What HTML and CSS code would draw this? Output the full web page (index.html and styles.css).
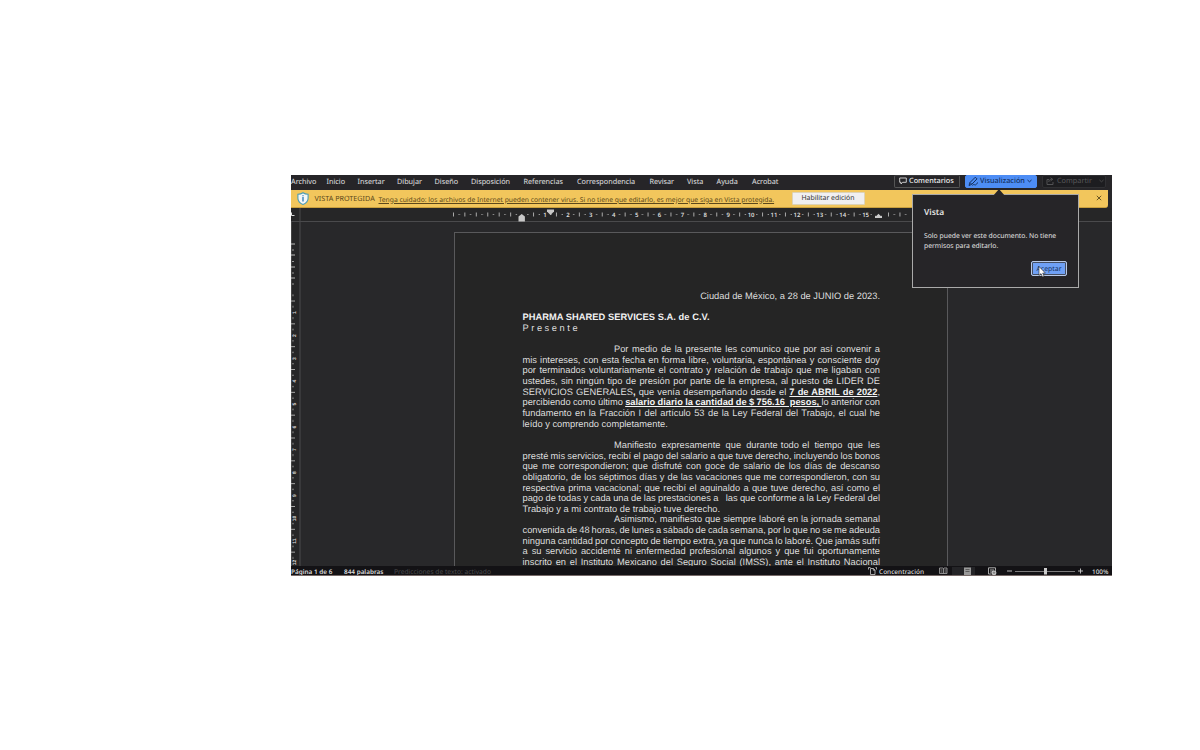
FILE: index.html
```html
<!DOCTYPE html>
<html lang="es">
<head>
<meta charset="utf-8">
<title>Documento</title>
<link rel="stylesheet" href="styles.css">
</head>
<body>
<main class="window">
  <header class="menu">
    <nav class="tabs">
      <span>Archivo</span><span>Inicio</span><span>Insertar</span><span>Dibujar</span><span>Diseño</span><span>Disposición</span><span>Referencias</span><span>Correspondencia</span><span>Revisar</span><span>Vista</span><span>Ayuda</span><span>Acrobat</span>
    </nav>
    <div class="actions">
      <span class="btn comments"><svg width="8" height="8" viewBox="0 0 8 8"><path d="M.7 1h6.600v4.300H3.600L2 7V5.300H.7z" fill="none" stroke="#ddd" stroke-width=".9"/></svg>Comentarios</span>
      <span class="btn viewing"><svg width="11" height="11" viewBox="0 0 11 11"><path d="M1 9.500 2 6.500 7.300 1.200 9 2.900 3.800 8.300zM2 6.500 3.800 8.300M4.500 9.500c1.500-2 2-.2 3-.6S9 7 10 6.500" fill="none" stroke="#14305f" stroke-width="1"/></svg>Visualización<svg width="5" height="4" viewBox="0 0 5 4"><path d="M.5 1 2.500 2.800 4.500 1" fill="none" stroke="#14305f" stroke-width="1"/></svg></span>
      <span class="btn share"><svg width="8" height="8" viewBox="0 0 8 8"><path d="M3 2.500H1v5h6V5M2.800 5c0-2 1.200-2.700 3-2.700M4.500.8 6.800 2.300 4.500 3.900" fill="none" stroke="#58585a" stroke-width=".9"/></svg>Compartir<svg class="share-arrow" width="5" height="4" viewBox="0 0 5 4"><path d="M.5 1 2.500 2.800 4.500 1" fill="none" stroke="#555" stroke-width=".8"/></svg></span>
    </div>
  </header>

  <section class="banner">
    <svg class="shield" width="12" height="13" viewBox="0 0 12 13"><path d="M6 .7C4.500 1.800 2.800 2.200.9 2.200v4c0 3 2 5 5.100 6.200 3.100-1.200 5.100-3.200 5.100-6.200v-4C9.200 2.200 7.500 1.800 6 .7z" fill="#f4f7f8" stroke="#4b9cb5" stroke-width="1.100"/><path d="M6 3.200v1.100M6 5v4.500" stroke="#2878b5" stroke-width="1.300"/></svg>
    <span class="banner-title">VISTA PROTEGIDA</span>
    <span class="banner-text">Tenga cuidado: los archivos de Internet pueden contener virus. Si no tiene que editarlo, es mejor que siga en Vista protegida.</span>
    <span class="enable">Habilitar edición</span>
    <svg class="close" width="6" height="6" viewBox="0 0 6 6"><path d="M.8.800 5.200 5.200M5.200.800.800 5.200" stroke="#6b5724" stroke-width="1"/></svg>
  </section>

  <div class="ruler">
    <svg width="821" height="14" viewBox="0 0 821 14">
      <defs>
        <pattern id="ht" x="231.100" y="0" width="22.900" height="14" patternUnits="userSpaceOnUse">
          <path d="M5.200 6.500h1.200M16.600 6.500h1.200" stroke="#aaa" stroke-width="1.200"/><path d="M11.450 4.500v4" stroke="#aaa" stroke-width="1"/>
        </pattern>
      </defs>
      <path d="M9 0V14" stroke="#48484a"/>
      <path d="M.5 4.500v3h3" fill="none" stroke="#ddd"/>
      <rect x="161" y="0" width="461" height="14" fill="url(#ht)"/>
      <path d="M162.500 4.500v4M185.300 4.500v4M208.200 4.500v4M597.500 4.500v4" stroke="#aaa"/>
      <g class="hnum">
        <text x="254">1</text><text x="276.900">2</text><text x="299.800">3</text><text x="322.700">4</text><text x="345.600">5</text><text x="368.500">6</text><text x="391.400">7</text><text x="414.300">8</text><text x="437.200">9</text><text x="460.100">10</text><text x="483">11</text><text x="505.900">12</text><text x="528.800">13</text><text x="551.700">14</text><text x="574.600">15</text>
      </g>
      <path d="M256 1.500h7v2L259.500 7 256 3.500z" fill="#c8c8c8"/>
      <path d="M227.500 13.500V8.500L230.700 6l3.200 2.500v5z" fill="#c8c8c8"/>
      <rect x="581" y="3" width="13" height="8" fill="#262627"/>
      <path d="M584 10V7.500l1 .7 2.500-2.500 2.500 2.500 1-.7V10z" fill="#ccc"/>
    </svg>
  </div>

  <div class="workspace">
    <aside class="vruler">
      <svg width="8" height="345" viewBox="0 0 8 345">
        <defs>
          <pattern id="vt" x="0" y="67.600" width="8" height="22.830" patternUnits="userSpaceOnUse">
            <path d="M1 5.700h2M1 17.100h2" stroke="#888"/><path d="M0 11.400h4" stroke="#aaa"/>
          </pattern>
        </defs>
        <path d="M.5 0V345" stroke="#444"/>
        <rect y="70" width="8" height="275" fill="url(#vt)"/>
        <path d="M0 22h4M0 33h4M0 45h4M0 56h4" stroke="#bbb"/><path d="M1 28h2M1 39.500h2M1 51h2M1 62h2" stroke="#999"/>
        <g class="vnum">
          <text transform="translate(4.600 90.500)rotate(-90)">1</text><text transform="translate(4.600 113.500)rotate(-90)">2</text><text transform="translate(4.600 136.500)rotate(-90)">3</text><text transform="translate(4.600 159)rotate(-90)">4</text><text transform="translate(4.600 182)rotate(-90)">5</text><text transform="translate(4.600 205)rotate(-90)">6</text><text transform="translate(4.600 227.500)rotate(-90)">7</text><text transform="translate(4.600 250.500)rotate(-90)">8</text><text transform="translate(4.600 273.500)rotate(-90)">9</text><text transform="translate(4.600 296.500)rotate(-90)">10</text><text transform="translate(4.600 319)rotate(-90)">11</text><text transform="translate(4.600 340.500)rotate(-90)">12</text>
        </g>
      </svg>
    </aside>
    <article class="page">
      <p class="right">Ciudad de México, a 28 de JUNIO de 2023.</p>
      <p>&nbsp;</p>
      <p class="start company">PHARMA SHARED SERVICES S.A. de C.V.</p>
      <p class="start spaced">Presente</p>
      <p>&nbsp;</p>
      <p class="indent">Por medio de la presente les comunico que por así convenir a</p>
      <p>mis intereses, con esta fecha en forma libre, voluntaria, espontánea y consciente doy</p>
      <p>por terminados voluntariamente el contrato y relación de trabajo que me ligaban con</p>
      <p>ustedes, sin ningún tipo de presión por parte de la empresa, al puesto de LIDER DE</p>
      <p>SERVICIOS GENERALES<b>,</b> que venía desempeñando desde el <b><u>7 de ABRIL de 2022</u></b><u>,</u></p>
      <p>percibiendo como último <b><u>salario diario la cantidad de $ 756.16&nbsp; pesos, </u></b>lo anterior con</p>
      <p>fundamento en la Fracción I del artículo 53 de la Ley Federal del Trabajo, el cual he</p>
      <p class="start">leído y comprendo completamente.</p>
      <p>&nbsp;</p>
      <p class="indent">Manifiesto expresamente que durante<span class="narrow"> todo </span>el tiempo que les</p>
      <p>presté mis servicios, recibí el pago del salario a que tuve derecho, incluyendo los bonos</p>
      <p>que me correspondieron; que disfruté con goce de salario de los días de descanso</p>
      <p>obligatorio, de los séptimos días y de las vacaciones que me correspondieron, con su</p>
      <p>respectiva prima vacacional; que recibí el aguinaldo a que tuve derecho, así como el</p>
      <p>pago de todas y cada una de las prestaciones a &nbsp; las que conforme a la Ley Federal del</p>
      <p class="start">Trabajo y a mi contrato de trabajo tuve derecho.</p>
      <p class="indent">Asimismo, manifiesto que siempre laboré en la jornada semanal</p>
      <p>convenida de 48 horas, de lunes a sábado de cada semana, por lo que no se me adeuda</p>
      <p>ninguna cantidad por concepto de tiempo extra, ya que nunca lo laboré. Que jamás sufrí</p>
      <p>a su servicio accidenté ni enfermedad profesional algunos y que fui oportunamente</p>
      <p>inscrito en el Instituto Mexicano del Seguro Social (IMSS), ante el Instituto Nacional</p>
    </article>
  </div>

  <footer class="status">
    <span class="pages">Página 1 de 6</span>
    <span class="words">844 palabras</span>
    <span class="predict">Predicciones de texto: activado</span>
    <span class="focus"><svg width="9" height="8" viewBox="0 0 9 8"><path d="M2.500 1.500h3L7 3v4.500H2.500zM5.300 1.500V3.200H7M.5 2.500V.5h2M8.500 2.500V.5h-1" fill="none" stroke="#ccc" stroke-width=".8"/></svg>Concentración</span>
    <svg class="views" width="58" height="8" viewBox="0 0 58 8"><rect x="13" width="23" height="9" fill="#242427"/><path d="M.5 1H4l.5.500L5 1h3v5.500H5L4.500 7 4 6.500H.5zM4.500 1.500V7M1.500 3h2M1.500 5h2M5.500 3h2M5.500 5h2" fill="none" stroke="#aaa" stroke-width=".8"/><path d="M25 .500h7v7.500h-7z" fill="#999"/><path d="M26.500 2.500h4M26.500 4.500h4" stroke="#444" stroke-width=".7"/><path d="M49.500.800h7v3M49.500.800V7h3M51 3h4M51 5h2" fill="none" stroke="#aaa"/><circle cx="55" cy="5.800" r="2.400" fill="#ccc"/><path d="M53.500 5.800h3M55 4.300v3" stroke="#444" stroke-width=".5"/></svg>
    <svg class="slider" width="78" height="8" viewBox="0 0 78 8"><path d="M0 4h5M71 4h5M73.500 1.500v5" stroke="#ccc" stroke-width=".9"/><path d="M8 4.500h60" stroke="#888" stroke-width=".9"/><rect x="37" y="1" width="3" height="6.500" fill="#ccc"/></svg>
    <span class="zoom">100%</span>
  </footer>

  <div class="callout">
    <svg class="tip" width="12" height="7" viewBox="0 0 12 7"><path d="M0 7 6 0l6 7z" fill="#262528"/></svg>
    <h2>Vista</h2>
    <p>Solo puede ver este documento. No tiene permisos para editarlo.</p>
    <span class="accept">Aceptar</span>
    <svg class="cursor" width="8" height="12" viewBox="0 0 8 12"><path d="M1 .5v9l2-1.900L4.500 11l1.600-.7-1.400-3.200h2.700z" fill="#fff" stroke="#222" stroke-width=".6"/></svg>
  </div>
</main>
</body>
</html>
```
FILE: styles.css
```css
* { box-sizing: border-box; }
body { margin: 0; background: #fff; font-family: "Noto Sans", "Open Sans", sans-serif; text-rendering: geometricPrecision; }
svg { display: block; flex: none; }
.window {
  position: relative;
  display: flex;
  flex-direction: column;
  width: 821px;
  height: 401px;
  margin: 174.500px 0 0 291px;
  overflow: hidden;
  background: #28282a;
  white-space: nowrap;
}
.menu { display: flex; justify-content: space-between; flex: none; height: 15.500px; background: #262528; color: #e0e0e0; }
.tabs {
  display: grid;
  grid-template-columns: 35.500px 31px 39.500px 37.500px 36.500px 52.500px 53.500px 72.500px 37.500px 29.500px 35.500px 40px;
  font-size: 7.250px;
  line-height: 14px;
}
.actions { display: flex; gap: 5px; align-items: flex-start; padding-right: 6px; font-size: 7.300px; }
.btn { display: flex; align-items: center; height: 13.500px; border: 1px solid #555; border-top-color: #39393b; border-radius: 2px; }
.comments { width: 66px; gap: 2px; padding-left: 4px; color: #eee; font-weight: 500; }
.viewing { width: 72px; gap: 1px; padding-left: 2px; background: #4d8df5; border-color: #4d8df5; color: #14305f; font-weight: 500; }
.viewing svg:last-child { margin-left: 1px; }
.share { width: 64px; gap: 3px; padding-left: 3px; border-color: #303033; color: #58585a; background: #1d1d20; }
.share-arrow { margin-left: 4px; }
.banner {
  display: flex;
  align-items: center;
  flex: none;
  width: 817px;
  height: 17.500px;
  padding: 0 6px;
  background: #f2c65c;
  border-bottom: 1px solid #c99f3d;
  border-radius: 0 0 3px 0;
  color: #5c481b;
  font-size: 7.200px;
}
.banner-title { width: 64px; margin-left: 5.500px; padding-top: 2px; }
.banner-text { width: 396px; padding-top: 2px; text-decoration: underline; text-underline-offset: 1px; font-size: 6.750px; }
.enable { width: 73px; height: 12.500px; margin-left: 17px; background: #f0eff0; border: 1px solid #ddd3b8; border-radius: 1px; color: #333; line-height: 12.500px; text-align: center; font-size: 6.900px; }
.close { margin-left: auto; margin-right: 0; }
.ruler { flex: none; height: 14px; border-bottom: 1px solid #4a4a4c; background: #262627; }
.hnum text, .vnum text { fill: #ddd; text-anchor: middle; font-family: "Noto Sans", sans-serif; font-size: 6px; font-weight: 600; }
.hnum text { transform: translateY(8.700px); }
.vnum text { font-family: "Liberation Sans", sans-serif; font-size: 5px; font-weight: bold; }
.workspace { display: flex; flex: 1; min-height: 0; overflow: hidden; }
.vruler { flex: none; width: 10px; border-right: 2px solid #39393b; background: #262627; }
.page {
  width: 494.500px;
  height: 370px;
  margin: 10.500px 0 0 152.500px;
  padding: 57.700px 67px 0 68px;
  border: 1px solid #59595b;
  background: #252525;
  color: #dedede;
  font-family: "Liberation Sans", Arial, sans-serif;
  font-size: 9.300px;
  line-height: 10.670px;
  flex: none;
}
.page p { height: 10.670px; margin: 0; text-align: justify; text-align-last: justify; word-spacing: -.8px; }
.page .start { text-align-last: left; word-spacing: 0; }
.page .right { text-align-last: right; word-spacing: 0; }
.page .company { font-weight: bold; color: #f1f1f1; letter-spacing: .04px; }
.page .spaced { letter-spacing: 2.550px; }
.page .indent { padding-left: 91.500px; }
.page .narrow { word-spacing: -2.800px; }
.page b { color: #f4f4f4; }
.status { display: flex; flex: none; align-items: center; height: 9.500px; background: #131215; border-bottom: 1px solid #776a68; color: #ddd; font-size: 6.400px; line-height: 9px; overflow: hidden; }
.status span { position: relative; top: 1px; }
.views, .slider { margin-top: 2px; }
.pages, .words { font-weight: 600; }
.pages { width: 53px; }
.words { width: 50px; }
.predict { width: 474px; color: #4b4b4d; font-size: 6.700px; }
.focus { display: flex; width: 71px; gap: 2px; font-weight: 500; font-size: 6.500px; align-items: center; }
.slider { margin-left: 10px; }
.zoom { margin-left: 7px; font-weight: 500; }
.callout { position: absolute; left: 621px; top: 19px; width: 166.500px; height: 94.500px; padding: 11px 11px 0; background: #262528; border: 1px solid #aaa; color: #e4e4e4; }
.tip { position: absolute; left: 80px; top: -6px; }
.callout h2 { margin: 0; font-size: 8.400px; line-height: 14px; font-weight: 600; }
.callout p { width: 145px; margin: 11.500px 0 0; font-size: 6.820px; line-height: 9.700px; white-space: normal; }
.accept { display: block; width: 36px; height: 15px; margin: 10.500px 0 0 107px; background: #6fa0f5; border: 1px solid #b8c9e8; outline: 1px solid #444d60; outline-offset: -2px; border-radius: 2px; color: #14305f; font-size: 6.900px; line-height: 15px; text-align: center; }
.cursor { position: absolute; left: 125px; top: 71px; }
```
